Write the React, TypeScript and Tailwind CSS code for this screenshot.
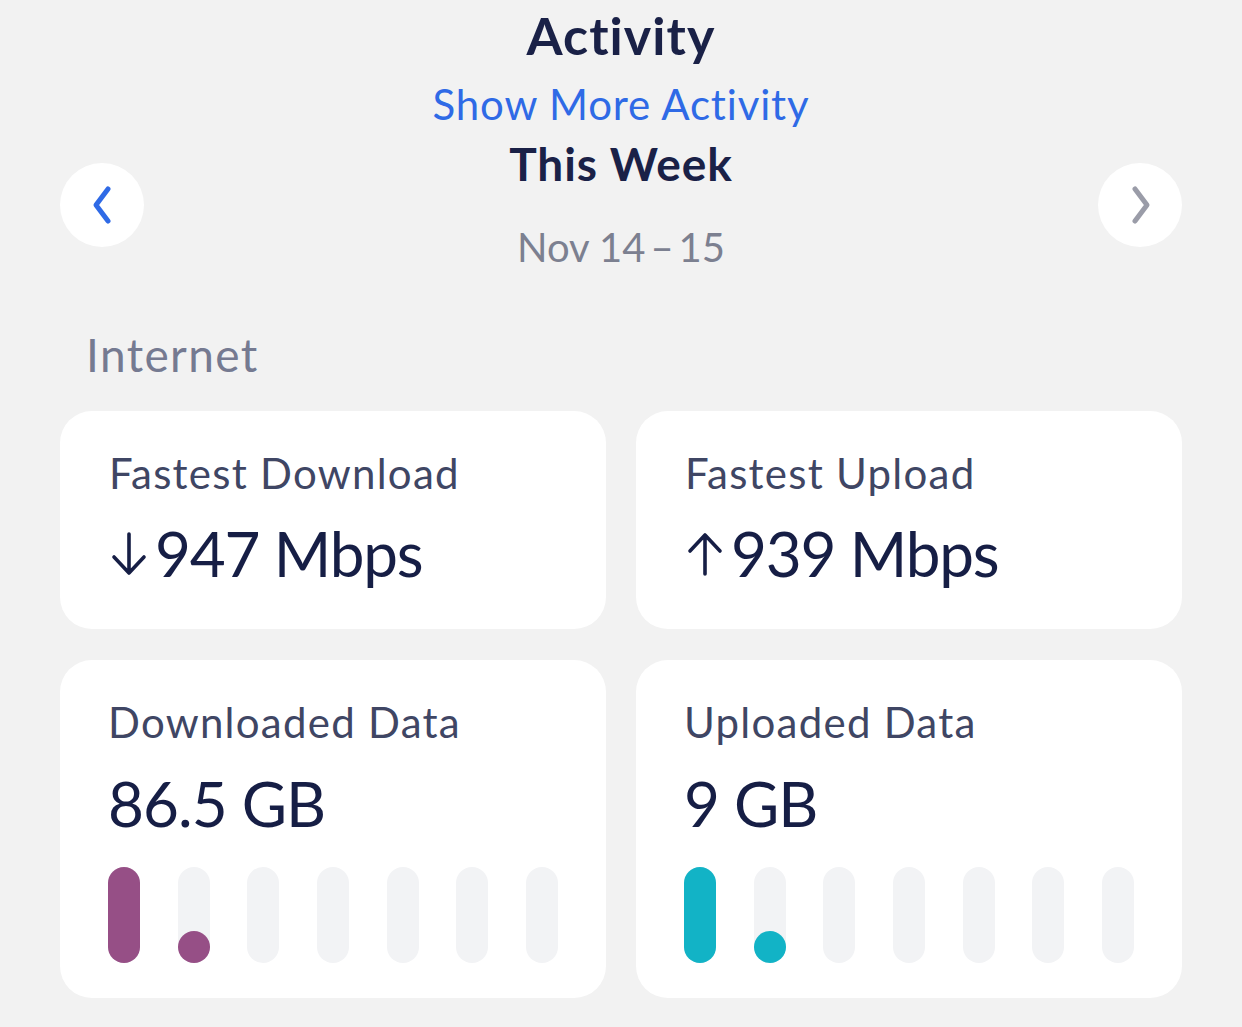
import React from 'react';

const font = { fontFamily: 'Lato, "Noto Sans", sans-serif' };

interface StatCardProps {
  label: string;
  value: string;
  arrow?: 'up' | 'down';
}

const Arrow: React.FC<{ dir: 'up' | 'down' }> = ({ dir }) => (
  <svg width="36" height="44" viewBox="0 0 36 44" className="mb-[13px] ml-[2px] mr-[8px]" fill="none">
    {dir === 'down' ? (
      <path d="M18 2v39M3 25l15 16 15-16" stroke="#161e45" strokeWidth="3.6" strokeLinecap="round" strokeLinejoin="round" />
    ) : (
      <path d="M18 42V3M3 19L18 3l15 16" stroke="#161e45" strokeWidth="3.6" strokeLinecap="round" strokeLinejoin="round" />
    )}
  </svg>
);

const StatCard: React.FC<StatCardProps> = ({ label, value, arrow }) => (
  <div className="h-[218px] rounded-[32px] bg-white pl-[49px] pt-[38px]">
    <p className="text-[42px] leading-[48px] tracking-[0.03em] text-[#3f4664]">{label}</p>
    <div className="mt-[20px] flex items-end text-[62px] leading-[72px] tracking-[-0.02em] text-[#161e45]">
      {arrow && <Arrow dir={arrow} />}
      <span>{value}</span>
    </div>
  </div>
);

interface DataCardProps {
  label: string;
  value: string;
  color: string;
}

const DataCard: React.FC<DataCardProps> = ({ label, value, color }) => (
  <div className="h-[338px] rounded-[32px] bg-white pl-[48px] pt-[38px]">
    <p className="text-[42px] leading-[48px] tracking-[0.03em] text-[#3f4664]">{label}</p>
    <p className="mt-[21px] text-[62px] leading-[72px] tracking-[-0.015em] text-[#161e45]">{value}</p>
    <div className="mt-[28px] flex w-[450px] justify-between">
      {Array.from({ length: 7 }).map((_, i) => (
        <div key={i} className="relative h-[96px] w-[32px] rounded-full bg-[#f2f3f5]">
          {i === 0 && <div className={`absolute inset-0 rounded-full ${color}`} />}
          {i === 1 && <div className={`absolute bottom-0 left-0 h-[32px] w-[32px] rounded-full ${color}`} />}
        </div>
      ))}
    </div>
  </div>
);

const ChevronButton: React.FC<{ dir: 'left' | 'right' }> = ({ dir }) => (
  <button className="flex h-[84px] w-[84px] items-center justify-center rounded-full bg-white">
    <svg width="28" height="40" viewBox="0 0 28 40" fill="none">
      {dir === 'left' ? (
        <path d="M20 4L8 20l12 16" stroke="#2f6ae6" strokeWidth="5" strokeLinecap="round" strokeLinejoin="round" />
      ) : (
        <path d="M9 4l12 16L9 36" stroke="#9a9ca8" strokeWidth="5" strokeLinecap="round" strokeLinejoin="round" />
      )}
    </svg>
  </button>
);

export default function App() {
  return (
    <div className="min-h-[1027px] w-[1242px] bg-[#f2f2f2] px-[60px] pt-[5px]" style={font}>
      <div className="flex flex-col items-center">
        <h1 className="text-[52px] font-bold leading-[60px] tracking-[0.02em] text-[#1a2147]">Activity</h1>
        <a className="mt-[15px] text-[42px] leading-[48px] tracking-[0.02em] text-[#2f6ae6]">Show More Activity</a>
      </div>

      <div className="mt-[10px] flex items-center justify-between">
        <ChevronButton dir="left" />
        <div className="flex flex-col items-center">
          <p className="text-[46px] font-bold leading-[52px] tracking-[0.02em] text-[#1a2147]">This Week</p>
          <p className="mt-[33px] text-[40px] leading-[48px] text-[#7c8090]">Nov 14{'\u2009'}–{'\u2009'}15</p>
        </div>
        <ChevronButton dir="right" />
      </div>

      <h2 className="mt-[58px] pl-[26px] text-[46px] leading-[52px] tracking-[0.03em] text-[#757a91]">Internet</h2>

      <div className="mt-[30px] grid grid-cols-2 gap-x-[30px] gap-y-[31px]">
        <StatCard label="Fastest Download" value="947 Mbps" arrow="down" />
        <StatCard label="Fastest Upload" value="939 Mbps" arrow="up" />
        <DataCard label="Downloaded Data" value="86.5 GB" color="bg-[#964f86]" />
        <DataCard label="Uploaded Data" value="9 GB" color="bg-[#12b3c6]" />
      </div>
    </div>
  );
}
